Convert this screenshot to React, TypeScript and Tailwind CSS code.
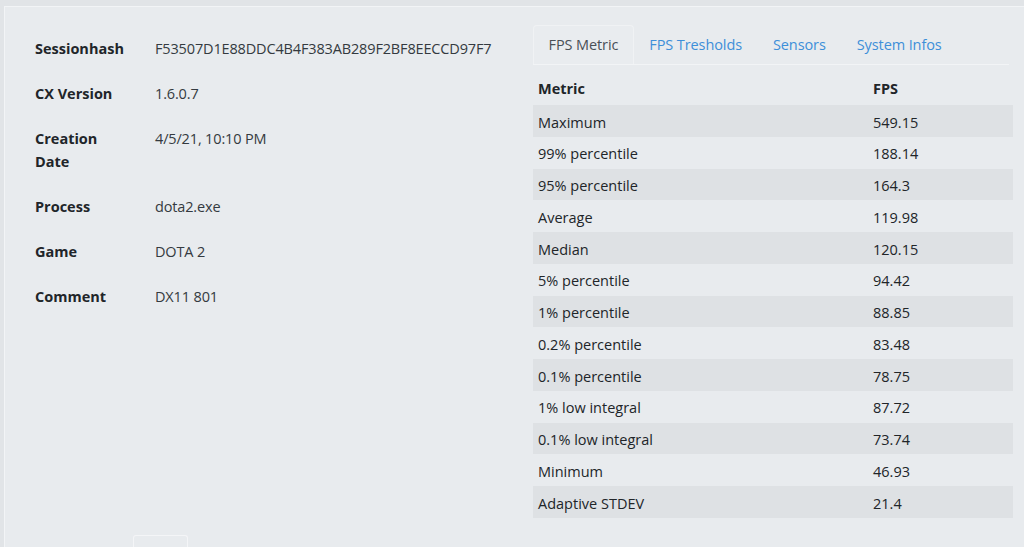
import React from 'react'

const sessionInfo: { label: string; value: string }[] = [
    { label: 'Sessionhash', value: 'F53507D1E88DDC4B4F383AB289F2BF8EECCD97F7' },
    { label: 'CX Version', value: '1.6.0.7' },
    { label: 'Creation Date', value: '4/5/21, 10:10 PM' },
    { label: 'Process', value: 'dota2.exe' },
    { label: 'Game', value: 'DOTA 2' },
    { label: 'Comment', value: 'DX11 801' },
]

const metrics: [string, string][] = [
    ['Maximum', '549.15'],
    ['99% percentile', '188.14'],
    ['95% percentile', '164.3'],
    ['Average', '119.98'],
    ['Median', '120.15'],
    ['5% percentile', '94.42'],
    ['1% percentile', '88.85'],
    ['0.2% percentile', '83.48'],
    ['0.1% percentile', '78.75'],
    ['1% low integral', '87.72'],
    ['0.1% low integral', '73.74'],
    ['Minimum', '46.93'],
    ['Adaptive STDEV', '21.4'],
]

const tabs = ['FPS Metric', 'FPS Tresholds', 'Sensors', 'System Infos']

export default function App() {
    return (
        <div
            className="w-[1024px] h-[547px] overflow-hidden bg-[#e1e4e7] pt-[6px] pl-[4px]"
            style={{ fontFamily: '"Open Sans", "Noto Sans", sans-serif' }}
        >
            <div className="h-full bg-[#e8ebee] border-t border-l border-[#f2f4f6] flex">
                {/* Left: session details */}
                <div className="w-[528px] pl-[30px] pt-[30px] flex flex-col">
                    <dl className="flex flex-col gap-[22px] text-[14.5px] leading-[23px]">
                        {sessionInfo.map((row) => (
                            <div key={row.label} className="flex">
                                <dt className="w-[120px] pr-[28px] font-bold text-[#212529]">{row.label}</dt>
                                <dd className="text-[#343a40] tracking-[-0.15px]">{row.value}</dd>
                            </div>
                        ))}
                    </dl>
                    <div className="mt-auto ml-[98px] w-[55px] h-[12px] border-t border-l border-r border-[#f4f5f7] rounded-t-[3px]" />
                </div>

                {/* Right: tabs + metric table */}
                <div className="w-[480px] pt-[18px]">
                    <div className="flex border-b border-[#f2f4f6] h-[40px] mr-[4px] text-[14.5px] tracking-[-0.1px]">
                        {tabs.map((tab, i) => (
                            <div
                                key={tab}
                                className={
                                    i === 0
                                        ? 'px-[14.5px] flex items-center text-[#495057] border border-b-0 border-[#f0f2f4] rounded-t-[4px] bg-[#e9ecef]'
                                        : 'px-[15.5px] flex items-center text-[#3d8fd9]'
                                }
                            >
                                {tab}
                            </div>
                        ))}
                    </div>
                    <table className="mt-[8px] w-full text-[14.5px] text-[#212529] border-collapse">
                        <thead>
                            <tr className="h-[32px]">
                                <th className="text-left font-bold pl-[5px] w-[340px]">Metric</th>
                                <th className="text-left font-bold">FPS</th>
                            </tr>
                        </thead>
                        <tbody>
                            {metrics.map(([name, fps], i) => (
                                <tr key={name} className={i % 2 === 0 ? 'h-[31.75px] bg-[#dee1e4]' : 'h-[31.75px]'}>
                                    <td className="pl-[5px] pt-[3px]">{name}</td>
                                    <td className="pt-[3px]">{fps}</td>
                                </tr>
                            ))}
                        </tbody>
                    </table>
                </div>
            </div>
        </div>
    )
}
